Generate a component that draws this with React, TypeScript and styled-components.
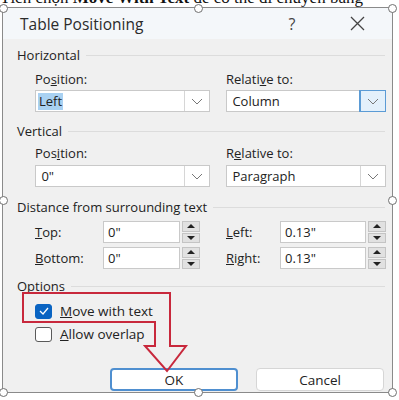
import styled, { createGlobalStyle } from "styled-components";

const GlobalStyle = createGlobalStyle`
  html, body {
    margin: 0;
    padding: 0;
    background: #ffffff;
  }
  body {
    font-family: "Open Sans", "Noto Sans", sans-serif;
  }
`;

const Page = styled.div`
  position: relative;
  width: 399px;
  height: 400px;
  overflow: hidden;
  background: #ffffff;
`;

const DocLine = styled.p`
  margin: -12px 0 0 0;
  height: 19px;
  line-height: 20px;
  font-family: "Liberation Serif", serif;
  font-size: 17px;
  color: #111;
  white-space: nowrap;
`;

const Frame = styled.div`
  position: relative;
  margin: 0 0 0 2px;
  width: 391px;
  height: 386px;
  border: 1px solid #8a8a8a;
  box-sizing: border-box;
  display: flex;
  flex-direction: column;
  background: #f0f0f0;
`;

const Handle = styled.span<{ $x: string; $y: string }>`
  position: absolute;
  left: ${(p) => p.$x};
  top: ${(p) => p.$y};
  width: 7px;
  height: 7px;
  margin: -4px 0 0 -4px;
  border-radius: 50%;
  border: 1px solid #707070;
  background: #fff;
  z-index: 3;
`;

const TitleBar = styled.div`
  height: 31px;
  display: flex;
  align-items: center;
  padding: 0 0 0 17px;
  background: #f4f7fa;
  color: #2b2b2b;
  font-size: 15.5px;
`;

const Title = styled.span`
  flex: 1;
`;

const TitleButton = styled.span<{ $space?: number }>`
  width: 40px;
  margin-right: ${(p) => p.$space ?? 0}px;
  font-size: 16px;
  color: #444;
  display: flex;
  justify-content: center;
`;

const Body = styled.div`
  padding: 8px 7px 0 14px;
  font-size: 13px;
  color: #222;
`;

const SectionHead = styled.div<{ $gap: number }>`
  margin-top: ${(p) => p.$gap}px;
  height: 16px;
  line-height: 16px;
  display: flex;
  align-items: center;
  gap: 6px;
  &::after {
    content: "";
    flex: 1;
    height: 1px;
    background: #dcdcdc;
  }
`;

const TwoCols = styled.div`
  display: grid;
  grid-template-columns: 175px 160px;
  column-gap: 16px;
  padding-left: 18px;
`;

const Label = styled.div<{ $gap: number }>`
  margin-top: ${(p) => p.$gap}px;
  height: 16px;
  line-height: 16px;
`;

const Combo = styled.div<{ $gap: number }>`
  margin-top: ${(p) => p.$gap}px;
  height: 22px;
  box-sizing: border-box;
  display: flex;
  border: 1px solid #c9c9c9;
  background: #fff;
`;

const ComboText = styled.div`
  flex: 1;
  display: flex;
  align-items: center;
  padding-left: 2px;
`;

const Selected = styled.span`
  background: #a9d1f2;
  padding: 0 1px;
  line-height: 17px;
`;

const DropButton = styled.div<{ $active?: boolean }>`
  width: 24px;
  display: flex;
  align-items: center;
  justify-content: center;
  border-left: 1px solid ${(p) => (p.$active ? "#5b9bd5" : "#d6d6d6")};
  background: ${(p) => (p.$active ? "#e3f0fb" : "#fff")};
  outline: ${(p) => (p.$active ? "1px solid #5b9bd5" : "none")};
`;

const SpinGrid = styled.div`
  display: grid;
  grid-template-columns: 68px 97px 80px 106px;
  row-gap: 4px;
  padding-left: 18px;
  margin-top: 6px;
`;

const SpinLabel = styled.div<{ $indent?: number }>`
  height: 22px;
  line-height: 22px;
  padding-left: ${(p) => p.$indent ?? 0}px;
  white-space: nowrap;
`;

const SpinField = styled.div`
  height: 22px;
  display: flex;
  gap: 2px;
`;

const SpinInput = styled.div`
  flex: 1;
  box-sizing: border-box;
  border: 1px solid #c9c9c9;
  background: #fff;
  line-height: 20px;
  padding-left: 4px;
`;

const SpinButtons = styled.div`
  width: 18px;
  display: flex;
  flex-direction: column;
  gap: 1px;
`;

const SpinButton = styled.div<{ $down?: boolean }>`
  flex: 1;
  background: #e1e1e1;
  border: 1px solid #c4c4c4;
  display: flex;
  align-items: center;
  justify-content: center;
  &::before {
    content: "";
    border-left: 4px solid transparent;
    border-right: 4px solid transparent;
    ${(p) =>
      p.$down ? "border-top: 4px solid #222;" : "border-bottom: 4px solid #222;"}
  }
`;

const CheckRow = styled.div<{ $gap: number }>`
  margin-top: ${(p) => p.$gap}px;
  margin-left: 18px;
  height: 18px;
  display: flex;
  align-items: center;
  gap: 8px;
  font-size: 13.5px;
`;

const Box = styled.span<{ $checked?: boolean }>`
  width: 17px;
  height: 15px;
  box-sizing: border-box;
  border-radius: 3px;
  border: 1px solid ${(p) => (p.$checked ? "#0a64c2" : "#5a5a5a")};
  background: ${(p) => (p.$checked ? "#0a64c2" : "#fff")};
  display: flex;
  align-items: center;
  justify-content: center;
`;

const Buttons = styled.div`
  margin-top: 25px;
  display: flex;
  justify-content: flex-end;
  gap: 18px;
  padding-right: 1px;
`;

const Button = styled.div<{ $primary?: boolean }>`
  width: 128px;
  height: 23px;
  box-sizing: border-box;
  border-radius: 4px;
  background: #fff;
  border: ${(p) => (p.$primary ? "2px solid #4f8fd0" : "1px solid #d6d6d6")};
  display: flex;
  align-items: center;
  justify-content: center;
  font-size: 13.5px;
  color: #222;
`;

const Annotation = styled.svg`
  position: absolute;
  left: 0;
  top: 0;
  z-index: 2;
  pointer-events: none;
`;

const Chevron = () => (
  <svg width="12" height="7" viewBox="0 0 12 7">
    <path d="M1 1 L6 6 L11 1" fill="none" stroke="#777" strokeWidth="1" />
  </svg>
);

const Spinner = ({ value }: { value: string }) => (
  <SpinField>
    <SpinInput>{value}</SpinInput>
    <SpinButtons>
      <SpinButton />
      <SpinButton $down />
    </SpinButtons>
  </SpinField>
);

export default function App() {
  return (
    <Page>
      <GlobalStyle />
      <DocLine>
        Tích chọn <b>Move With Text</b> để có thể di chuyển bảng
      </DocLine>
      <Frame>
        <Handle $x="0%" $y="0%" />
        <Handle $x="50%" $y="0%" />
        <Handle $x="100%" $y="0%" />
        <Handle $x="100%" $y="50%" />
        <Handle $x="0%" $y="50%" />
        <Handle $x="0%" $y="100%" />
        <Handle $x="50%" $y="100%" />
        <Handle $x="100%" $y="100%" />
        <TitleBar>
          <Title>Table Positioning</Title>
          <TitleButton $space={25}>?</TitleButton>
          <TitleButton $space={15}>
            <svg width="15" height="15" viewBox="0 0 15 15">
              <path d="M1 1 L14 14 M14 1 L1 14" stroke="#444" strokeWidth="1.3" />
            </svg>
          </TitleButton>
        </TitleBar>
        <Body>
          <SectionHead $gap={0}>Horizontal</SectionHead>
          <TwoCols>
            <div>
              <Label $gap={8}>
                Po<u>s</u>ition:
              </Label>
              <Combo $gap={3}>
                <ComboText>
                  <Selected>Left</Selected>
                </ComboText>
                <DropButton>
                  <Chevron />
                </DropButton>
              </Combo>
            </div>
            <div>
              <Label $gap={8}>
                Relati<u>v</u>e to:
              </Label>
              <Combo $gap={3}>
                <ComboText>&nbsp;Column</ComboText>
                <DropButton $active>
                  <Chevron />
                </DropButton>
              </Combo>
            </div>
          </TwoCols>
          <SectionHead $gap={11}>Vertical</SectionHead>
          <TwoCols>
            <div>
              <Label $gap={6}>
                Pos<u>i</u>tion:
              </Label>
              <Combo $gap={4}>
                <ComboText>&nbsp;0"</ComboText>
                <DropButton>
                  <Chevron />
                </DropButton>
              </Combo>
            </div>
            <div>
              <Label $gap={6}>
                R<u>e</u>lative to:
              </Label>
              <Combo $gap={4}>
                <ComboText>&nbsp;Paragraph</ComboText>
                <DropButton>
                  <Chevron />
                </DropButton>
              </Combo>
            </div>
          </TwoCols>
          <SectionHead $gap={12}>Distance from surrounding text</SectionHead>
          <SpinGrid>
            <SpinLabel>
              <u>T</u>op:
            </SpinLabel>
            <Spinner value={'0"'} />
            <SpinLabel $indent={26}>
              <u>L</u>eft:
            </SpinLabel>
            <Spinner value={'0.13"'} />
            <SpinLabel>
              <u>B</u>ottom:
            </SpinLabel>
            <Spinner value={'0"'} />
            <SpinLabel $indent={26}>
              <u>R</u>ight:
            </SpinLabel>
            <Spinner value={'0.13"'} />
          </SpinGrid>
          <SectionHead $gap={9}>Options</SectionHead>
          <CheckRow $gap={8}>
            <Box $checked>
              <svg width="10" height="8" viewBox="0 0 10 8">
                <path d="M1 4 L4 7 L9 1" fill="none" stroke="#fff" strokeWidth="1.3" />
              </svg>
            </Box>
            <span>
              <u>M</u>ove with text
            </span>
          </CheckRow>
          <CheckRow $gap={5}>
            <Box />
            <span>
              <u>A</u>llow overlap
            </span>
          </CheckRow>
          <Buttons>
            <Button $primary>OK</Button>
            <Button>Cancel</Button>
          </Buttons>
        </Body>
      </Frame>
      <Annotation width="399" height="400" viewBox="0 0 399 400">
        <path
          d="M23 293 L170 293 L170 346 L186 346 L167 371 L145 346 L155 346 L155 322 L23 322 Z"
          fill="none"
          stroke="#c8283c"
          strokeWidth="2"
        />
      </Annotation>
    </Page>
  );
}
